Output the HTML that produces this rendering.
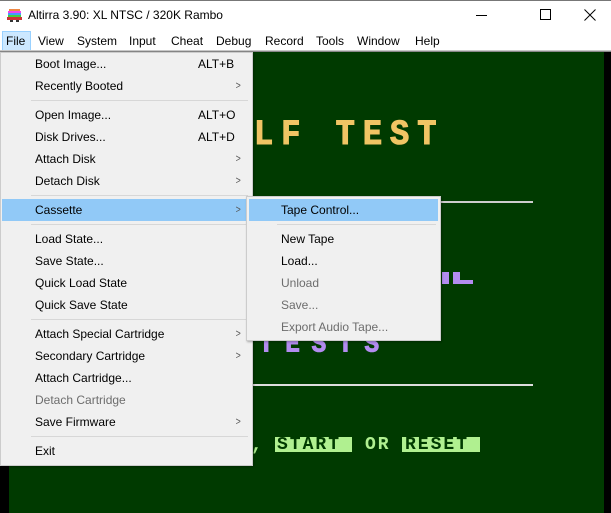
<!DOCTYPE html>
<html><head><style>
*{margin:0;padding:0;box-sizing:border-box}
body{width:611px;height:513px;overflow:hidden;background:#fff;position:relative;font-family:"Liberation Sans",sans-serif;font-size:12px;color:#000}
.a{position:absolute;white-space:nowrap}
.retro{font-family:"Liberation Mono",monospace;font-weight:bold}
.mi{position:absolute;left:0;width:100%;height:22px;line-height:22px}
.mi span.t{position:absolute;left:34px}
.mi span.k{position:absolute;left:197px}
.mi span.r{position:absolute;left:234px;font-size:11px;color:#555;transform:scaleX(0.8)}
.sep{position:absolute;left:30px;right:4px;height:1px;background:#d7d7d7}
.dis{color:#6d6d6d}
</style></head><body>
<div class="a" style="left:0;top:0;width:611px;height:1px;background:#777"></div>
<svg class="a" style="left:7px;top:8px" width="15" height="14" viewBox="0 0 15 14">
<rect x="2" y="1" width="11" height="2" fill="#e84"/><rect x="1" y="3" width="13" height="2" fill="#e4e"/><rect x="1" y="5" width="13" height="2" fill="#49f"/><rect x="1" y="7" width="13" height="2" fill="#4c4"/><rect x="0" y="9" width="15" height="3" fill="#c33"/><rect x="3" y="12" width="3" height="2" fill="#333"/><rect x="9" y="12" width="3" height="2" fill="#333"/></svg>
<div class="a" style="left:28px;top:8px;font-size:12px">Altirra 3.90: XL NTSC / 320K Rambo</div>
<div class="a" style="left:476px;top:15px;width:11px;height:1px;background:#000"></div>
<div class="a" style="left:540px;top:9px;width:11px;height:11px;border:1px solid #000"></div>
<svg class="a" style="left:584px;top:9px" width="12" height="12"><path d="M0.5 0.5L11.5 11.5M11.5 0.5L0.5 11.5" stroke="#000" stroke-width="1"/></svg>
<div class="a" style="left:2px;top:31px;width:29px;height:20px;background:#cce8ff;border:1px solid #99d1ff"></div>
<div class="a" style="left:6px;top:34px">File</div>
<div class="a" style="left:38px;top:34px">View</div>
<div class="a" style="left:77px;top:34px">System</div>
<div class="a" style="left:129px;top:34px">Input</div>
<div class="a" style="left:171px;top:34px">Cheat</div>
<div class="a" style="left:216px;top:34px">Debug</div>
<div class="a" style="left:265px;top:34px">Record</div>
<div class="a" style="left:316px;top:34px">Tools</div>
<div class="a" style="left:357px;top:34px">Window</div>
<div class="a" style="left:415px;top:34px">Help</div>
<div class="a" style="left:0;top:50px;width:611px;height:2px;background:#c8c8c8"></div>
<div class="a" style="left:0;top:51px;width:611px;height:1px;background:#888"></div>
<div class="a" style="left:0;top:52px;width:611px;height:461px;background:#000"></div>
<div class="a" style="left:9px;top:52px;width:595px;height:461px;background:#003a00;overflow:hidden">
 <div class="a retro" style="left:245px;top:64px;font-size:32px;color:#f0c464;letter-spacing:8px;transform:scaleY(1.1);-webkit-text-stroke:1px #f0c464">LF TEST</div>
 <div class="a" style="left:400px;top:149px;width:124px;height:2px;background:#ccc"></div>
 <div class="a" style="left:433px;top:220px;width:7px;height:12px;background:#b38cf0"></div>
 <div class="a" style="left:444px;top:220px;width:7px;height:12px;background:#b38cf0"></div>
 <div class="a" style="left:444px;top:228px;width:20px;height:4px;background:#b38cf0"></div>
 <div class="a retro" style="left:250px;top:280px;font-size:24px;color:#b38cf0;letter-spacing:12px;transform:scaleY(1.1);-webkit-text-stroke:1px #b38cf0">TESTS</div>
 <div class="a" style="left:241px;top:332px;width:283px;height:2px;background:#ddd"></div>
 <div class="a retro" style="left:242px;top:382px;font-size:19px;color:#b0f090">,</div>
 <div class="a" style="left:266px;top:385px;width:77px;height:15px;background:#b0f090"></div>
 <div class="a retro" style="left:268px;top:383px;font-size:18px;color:#003a00;letter-spacing:2px">START</div>
 <div class="a retro" style="left:356px;top:383px;font-size:18px;color:#b0f090;letter-spacing:2px">OR</div>
 <div class="a" style="left:393px;top:385px;width:78px;height:15px;background:#b0f090"></div>
 <div class="a retro" style="left:396px;top:383px;font-size:18px;color:#003a00;letter-spacing:2px">RESET</div>
</div>
<div class="a" style="left:0;top:52px;width:253px;height:414px;background:#f0f0f0;border:1px solid #ccc;box-shadow:1px 1px 2px rgba(0,0,0,.3)">
 <div class="mi" style="top:0"><span class="t">Boot Image...</span><span class="k">ALT+B</span></div>
 <div class="mi" style="top:22px"><span class="t">Recently Booted</span><span class="r">&gt;</span></div>
 <div class="sep" style="top:47px"></div>
 <div class="mi" style="top:51px"><span class="t">Open Image...</span><span class="k">ALT+O</span></div>
 <div class="mi" style="top:73px"><span class="t">Disk Drives...</span><span class="k">ALT+D</span></div>
 <div class="mi" style="top:95px"><span class="t">Attach Disk</span><span class="r">&gt;</span></div>
 <div class="mi" style="top:117px"><span class="t">Detach Disk</span><span class="r">&gt;</span></div>
 <div class="sep" style="top:142px"></div>
 <div class="mi" style="top:146px;left:1px;width:248px;background:#91c9f7"><span class="t" style="left:33px">Cassette</span><span class="r" style="left:233px">&gt;</span></div>
 <div class="sep" style="top:171px"></div>
 <div class="mi" style="top:175px"><span class="t">Load State...</span></div>
 <div class="mi" style="top:197px"><span class="t">Save State...</span></div>
 <div class="mi" style="top:219px"><span class="t">Quick Load State</span></div>
 <div class="mi" style="top:241px"><span class="t">Quick Save State</span></div>
 <div class="sep" style="top:266px"></div>
 <div class="mi" style="top:270px"><span class="t">Attach Special Cartridge</span><span class="r">&gt;</span></div>
 <div class="mi" style="top:292px"><span class="t">Secondary Cartridge</span><span class="r">&gt;</span></div>
 <div class="mi" style="top:314px"><span class="t">Attach Cartridge...</span></div>
 <div class="mi dis" style="top:336px"><span class="t">Detach Cartridge</span></div>
 <div class="mi" style="top:358px"><span class="t">Save Firmware</span><span class="r">&gt;</span></div>
 <div class="sep" style="top:383px"></div>
 <div class="mi" style="top:387px"><span class="t">Exit</span></div>
</div>
<div class="a" style="left:246px;top:196px;width:195px;height:145px;background:#f0f0f0;border:1px solid #ccc;box-shadow:1px 1px 2px rgba(0,0,0,.3)">
 <div class="mi" style="top:2px;left:2px;width:189px;background:#91c9f7"><span class="t" style="left:32px">Tape Control...</span></div>
 <div class="sep" style="top:27px;left:30px"></div>
 <div class="mi" style="top:31px"><span class="t">New Tape</span></div>
 <div class="mi" style="top:53px"><span class="t">Load...</span></div>
 <div class="mi dis" style="top:75px"><span class="t">Unload</span></div>
 <div class="mi dis" style="top:97px"><span class="t">Save...</span></div>
 <div class="mi dis" style="top:119px"><span class="t">Export Audio Tape...</span></div>
</div>
</body></html>
